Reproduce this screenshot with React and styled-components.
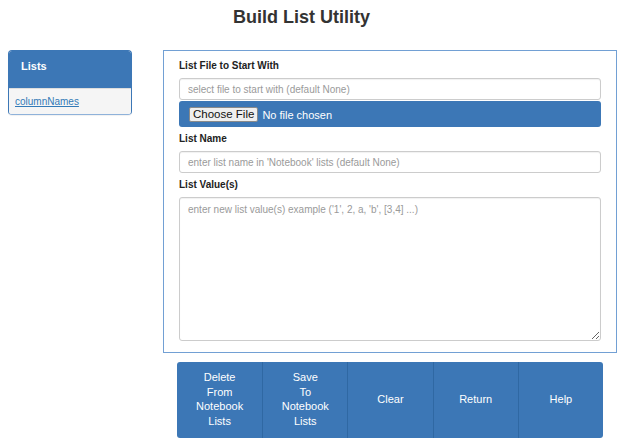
import React from "react";
import styled, { createGlobalStyle } from "styled-components";

const blue = "#3c77b6";

const GlobalStyle = createGlobalStyle`
  body {
    margin: 0;
    background: #ffffff;
    font-family: "Liberation Sans", Arial, sans-serif;
  }
`;

const Page = styled.div`
  padding: 7px 9px 8px 8px;
`;

const Title = styled.h1`
  margin: 0 0 23px;
  padding-right: 22px;
  font-size: 18px;
  line-height: 20px;
  font-weight: bold;
  color: #333333;
  text-align: center;
`;

const Layout = styled.div`
  display: flex;
  align-items: flex-start;
  gap: 31px;
`;

const Sidebar = styled.div`
  box-sizing: border-box;
  width: 124px;
  flex-shrink: 0;
  border: 1px solid ${blue};
  border-bottom-color: #8fb2da;
  border-radius: 4px;
  overflow: hidden;
  box-shadow: 0 1px 1px rgba(0, 0, 0, 0.06);
`;

const SidebarHeader = styled.div`
  background: ${blue};
  color: #ffffff;
  font-size: 11px;
  font-weight: bold;
  line-height: 16px;
  padding: 7px 12px 14px;
`;

const SidebarBody = styled.div`
  background: #f5f5f5;
  border-top: 1px solid #dddddd;
  padding: 3px 6px 4px;
  line-height: 16px;
`;

const ListLink = styled.a`
  font-size: 10px;
  color: #337ab7;
  text-decoration: underline;
`;

const Main = styled.div`
  flex: 1;
  display: flex;
  flex-direction: column;
`;

const FormPanel = styled.div`
  border: 1px solid #72a0d4;
  padding: 7px 15px 11px;
  display: flex;
  flex-direction: column;
`;

const Label = styled.label`
  font-size: 10px;
  font-weight: bold;
  line-height: 16px;
  color: #222222;
  margin: ${({ $first }) => ($first ? "0" : "4px")} 0 4px;
`;

const TextInput = styled.input`
  box-sizing: border-box;
  width: 100%;
  height: 22px;
  padding: 0 8px;
  border: 1px solid #cccccc;
  border-radius: 3px;
  font-family: "Liberation Sans", Arial, sans-serif;
  font-size: 10px;
  color: #555555;
  box-shadow: inset 0 1px 1px rgba(0, 0, 0, 0.06);
  &::placeholder {
    color: #9a9a9a;
  }
`;

const FileBar = styled.div`
  margin-top: 1px;
  height: 26px;
  box-sizing: border-box;
  background: ${blue};
  border-radius: 3px;
  padding: 0 10px;
  display: flex;
  align-items: center;
`;

const FileInput = styled.input`
  font-family: "Liberation Sans", Arial, sans-serif;
  font-size: 11px;
  color: #ffffff;
  &::file-selector-button {
    font-family: "Liberation Sans", Arial, sans-serif;
    font-size: 11.5px;
    color: #111111;
    background: #efefef;
    border: 1px solid #8a8a8a;
    border-radius: 2px;
    padding: 0 3px;
    height: 15px;
    margin-right: 4px;
  }
`;

const TextArea = styled.textarea`
  box-sizing: border-box;
  width: 100%;
  height: 144px;
  padding: 6px 8px;
  border: 1px solid #cccccc;
  border-radius: 3px;
  font-family: "Liberation Sans", Arial, sans-serif;
  font-size: 10px;
  color: #555555;
  box-shadow: inset 0 1px 1px rgba(0, 0, 0, 0.06);
  &::placeholder {
    color: #9a9a9a;
  }
`;

const ButtonGroup = styled.div`
  margin: 9px 14px 0;
  display: grid;
  grid-template-columns: repeat(5, 1fr);
  height: 76px;
  border-radius: 3px;
  overflow: hidden;
`;

const ActionButton = styled.button`
  background: ${blue};
  color: #ffffff;
  border: none;
  border-left: ${({ $first }) => ($first ? "none" : "1px solid #2f68a3")};
  font-family: "Liberation Sans", Arial, sans-serif;
  font-size: 11px;
  line-height: 14.5px;
  padding: 0 4px 2px;
  white-space: pre-line;
  cursor: pointer;
`;

const actions = [
  "Delete\nFrom\nNotebook\nLists",
  "Save\nTo\nNotebook\nLists",
  "Clear",
  "Return",
  "Help",
];

export default function App() {
  return (
    <Page>
      <GlobalStyle />
      <Title>Build List Utility</Title>
      <Layout>
        <Sidebar>
          <SidebarHeader>Lists</SidebarHeader>
          <SidebarBody>
            <ListLink href="#">columnNames</ListLink>
          </SidebarBody>
        </Sidebar>
        <Main>
          <FormPanel>
            <Label $first>List File to Start With</Label>
            <TextInput placeholder="select file to start with (default None)" />
            <FileBar>
              <FileInput type="file" />
            </FileBar>
            <Label>List Name</Label>
            <TextInput placeholder="enter list name in 'Notebook' lists (default None)" />
            <Label>List Value(s)</Label>
            <TextArea placeholder="enter new list value(s) example ('1', 2, a, 'b', [3,4] ...)" />
          </FormPanel>
          <ButtonGroup>
            {actions.map((text, i) => (
              <ActionButton key={text} $first={i === 0}>
                {text}
              </ActionButton>
            ))}
          </ButtonGroup>
        </Main>
      </Layout>
    </Page>
  );
}
